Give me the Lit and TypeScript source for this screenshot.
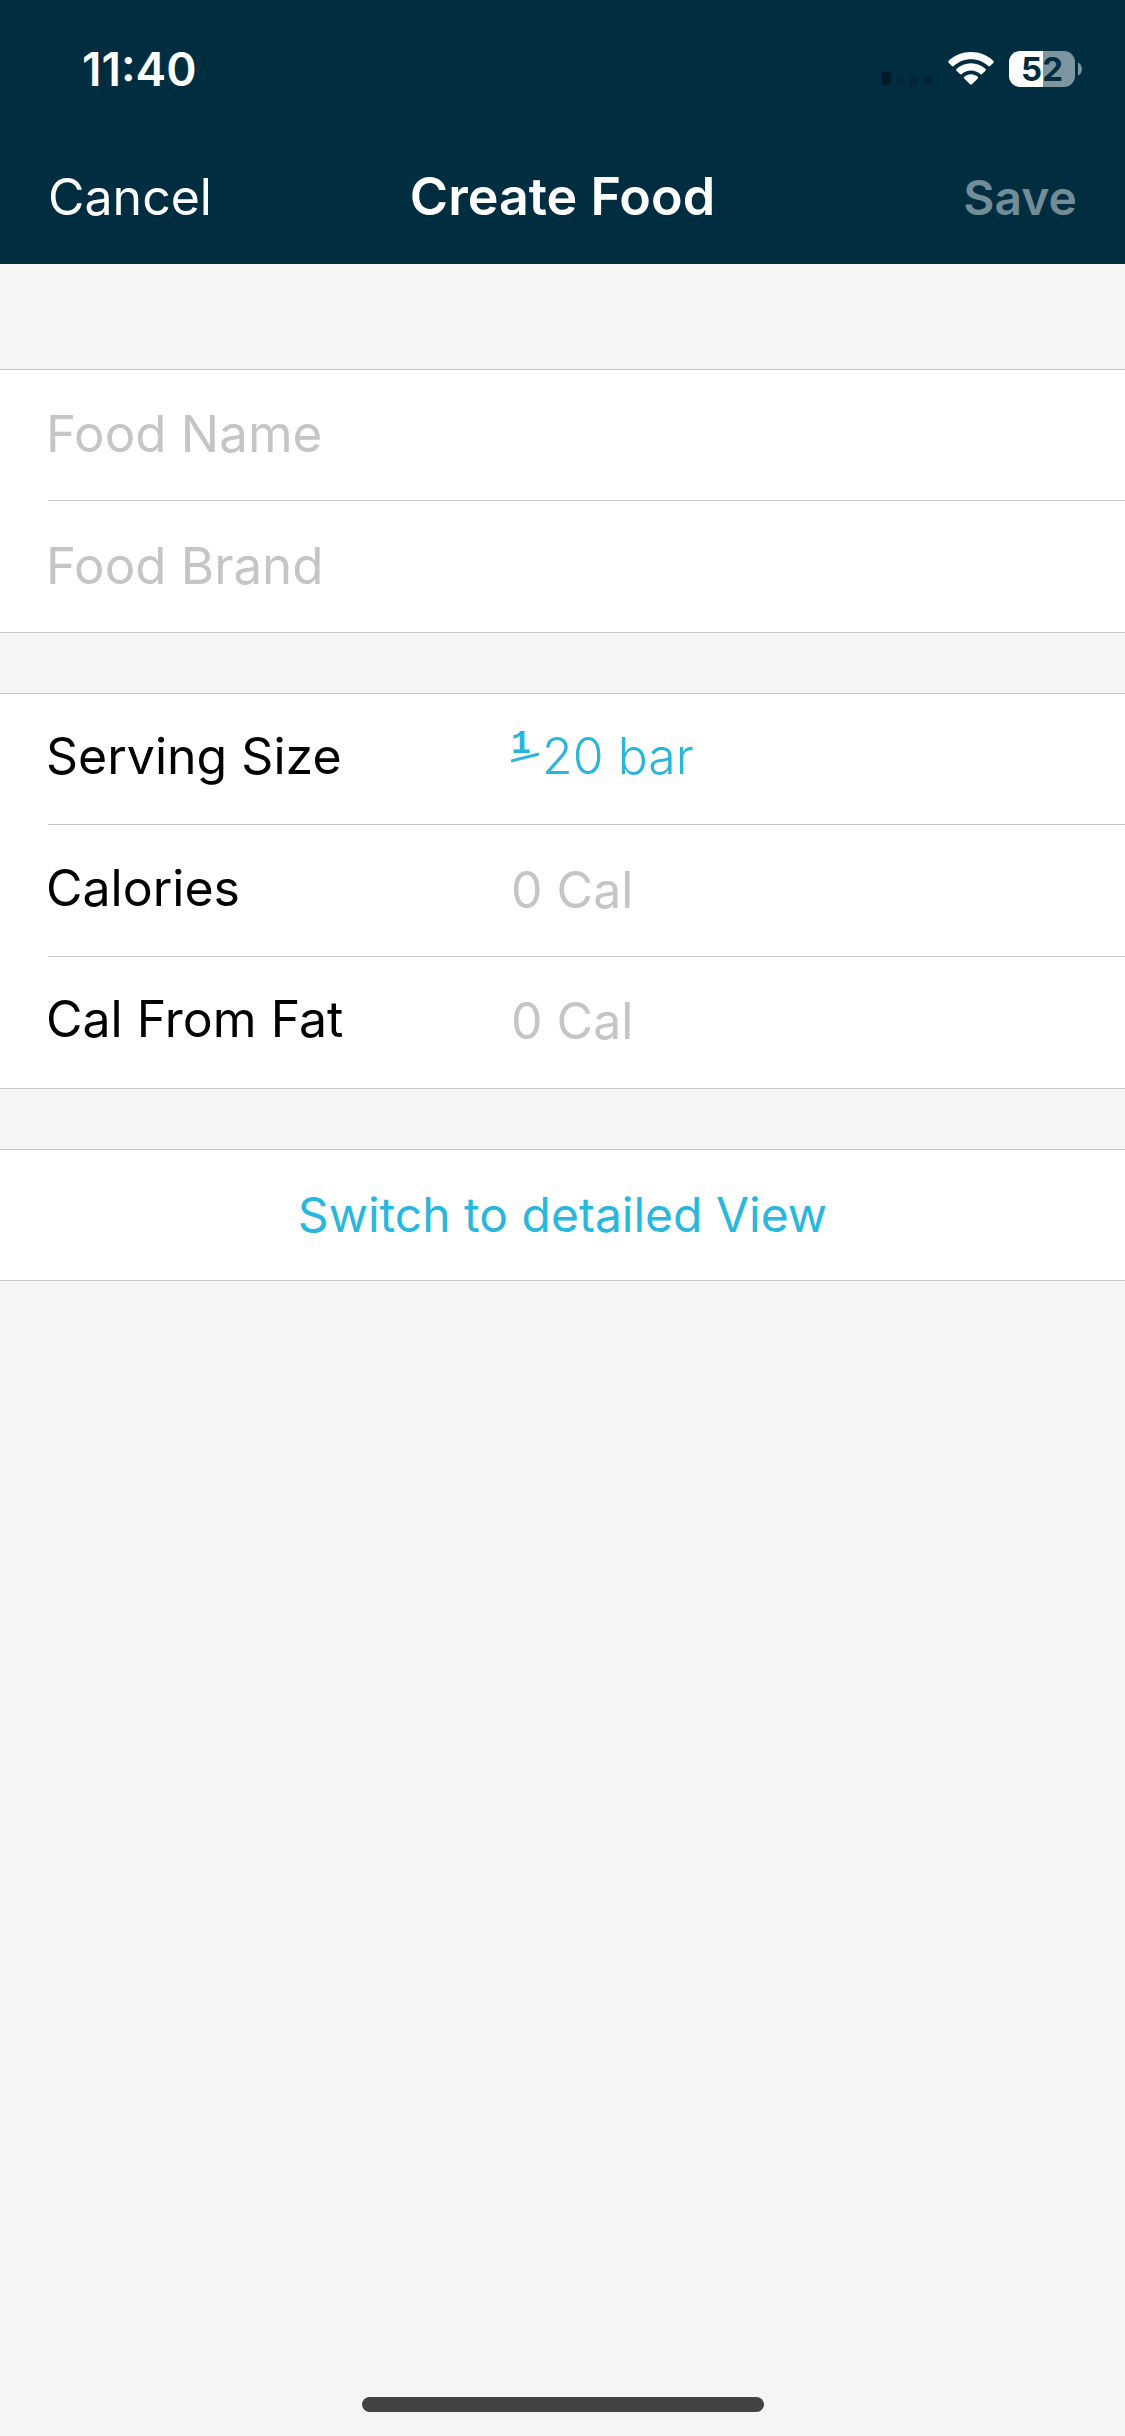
import { LitElement, html, svg, css } from "lit";
import { customElement, property } from "lit/decorators.js";

const shared = css`
  *,
  *::before,
  *::after {
    box-sizing: border-box;
  }
  button,
  input {
    margin: 0;
    padding: 0;
    border: 0;
    background: none;
    font: inherit;
    color: inherit;
    letter-spacing: inherit;
  }
  button {
    cursor: pointer;
  }
  input {
    outline: none;
  }
`;

@customElement("status-bar")
class StatusBar extends LitElement {
  static styles = [
    shared,
    css`
      :host {
        display: flex;
        align-items: center;
        justify-content: space-between;
        height: 132px;
        padding: 6px 43px 0 82px;
        color: #fff;
      }
      .time {
        font-size: 46px;
        font-weight: 600;
      }
      .icons {
        display: flex;
        align-items: center;
        gap: 15px;
      }
      .icon {
        display: block;
      }
      .battery {
        display: flex;
        align-items: center;
        gap: 3px;
      }
      .level {
        display: flex;
        align-items: center;
        justify-content: center;
        width: 66px;
        height: 36px;
        border-radius: 11px;
        background: linear-gradient(to right, #fff 52%, #7c959f 52%);
        color: #002d3f;
        font-size: 33px;
        font-weight: 700;
        line-height: 36px;
      }
    `,
  ];

  render() {
    return html`
      <span class="time">11:40</span>
      <div class="icons">
        <svg class="icon" width="51" height="36" viewBox="0 0 51 36" aria-hidden="true">
          <rect x="0" y="21" width="9" height="13" rx="2" fill="#001c2a" />
          <rect x="14" y="25" width="8" height="9" rx="2" fill="#002536" />
          <rect x="28" y="25" width="8" height="9" rx="2" fill="#002536" />
          <rect x="42" y="25" width="9" height="9" rx="2" fill="#002439" />
        </svg>
        <svg class="icon" width="46" height="36" viewBox="0 0 46 36" role="img" aria-label="Wi-Fi">
          <g fill="#fff">
            <path d="M23 1C14.500 1 6.600 4.300 0.700 9.700C0.100 10.300 0.100 11.100 0.600 11.700L3.900 15C4.400 15.500 5.200 15.500 5.800 15C10.300 10.800 16.300 8.300 23 8.300S35.700 10.800 40.200 15C40.800 15.500 41.600 15.500 42.100 15L45.400 11.700C45.900 11.100 45.900 10.300 45.300 9.700C39.400 4.300 31.500 1 23 1Z" />
            <path d="M23 12.200C17.500 12.200 12.400 14.300 8.600 17.700C8 18.300 8 19.100 8.500 19.700L11.900 23C12.400 23.500 13.200 23.500 13.800 23C16.200 20.800 19.500 19.500 23 19.500S29.800 20.800 32.200 23C32.800 23.500 33.600 23.500 34.100 23L37.500 19.700C38 19.100 38 18.300 37.400 17.700C33.600 14.300 28.500 12.200 23 12.200Z" />
            <path d="M23 23.200C20.500 23.200 18.200 24.100 16.400 25.600C15.800 26.100 15.800 26.900 16.300 27.500L22 33.200C22.600 33.800 23.400 33.800 24 33.200L29.700 27.500C30.200 26.900 30.200 26.100 29.600 25.600C27.800 24.100 25.500 23.200 23 23.200Z" />
          </g>
        </svg>
        <div class="battery">
          <span class="level">52</span>
          <svg class="icon" width="4" height="14" viewBox="0 0 4 14" aria-hidden="true">
            <path d="M0 0.500C2.400 1.700 4 4 4 7S2.400 12.300 0 13.500Z" fill="#7c959f" />
          </svg>
        </div>
      </div>
    `;
  }
}

@customElement("nav-bar")
class NavBar extends LitElement {
  @property() heading = "";

  static styles = [
    shared,
    css`
      :host {
        display: grid;
        grid-template-columns: 1fr auto 1fr;
        align-items: baseline;
        height: 132px;
        padding: 34px 48px 0;
        color: #fff;
        line-height: 62px;
      }
      .title {
        margin: 0;
        font-size: 52px;
        font-weight: 600;
      }
      .cancel {
        justify-self: start;
        font-size: 50px;
      }
      .save {
        justify-self: end;
        font-size: 48px;
        font-weight: 600;
        color: #728c98;
      }
    `,
  ];

  render() {
    return html`
      <button class="cancel" type="button">Cancel</button>
      <h1 class="title">${this.heading}</h1>
      <button class="save" type="button" disabled>Save</button>
    `;
  }
}

const slash = svg`<line x1="0" y1="9" x2="28" y2="2" stroke="currentColor" stroke-width="3" />`;

@customElement("app-root")
class AppRoot extends LitElement {
  static styles = [
    shared,
    css`
      :host {
        display: flex;
        flex-direction: column;
        min-height: 100vh;
        background: #f5f5f5;
        color: #000;
        font-family: Inter, "Liberation Sans", sans-serif;
        font-size: 50px;
      }
      .top {
        background: #002d3f;
      }
      .form {
        display: flex;
        flex-direction: column;
        gap: 60px;
        flex: 1;
        padding-top: 105px;
      }
      .group {
        background: #fff;
        border-bottom: 1px solid #c6c6c6;
        box-shadow: inset 0 1px #c6c6c6;
      }
      .row {
        display: grid;
        grid-template-columns: 465px 1fr;
        align-items: center;
        height: 132px;
        padding-left: 46px;
        padding-bottom: 3px;
        background: linear-gradient(#c6c6c6, #c6c6c6) 48px 100% / 100% 1px no-repeat;
      }
      .row.wide {
        grid-template-columns: 1fr;
        font-size: 51px;
      }
      .row:last-child {
        height: 131px;
        background: none;
      }
      .label {
        padding-bottom: 4px;
      }
      .field {
        width: 100%;
        min-width: 0;
      }
      .field::placeholder {
        color: #c5c5c5;
        opacity: 1;
      }
      .serving {
        display: flex;
        align-items: center;
        gap: 1px;
        padding-bottom: 3px;
        color: #2ab5da;
        font-weight: 300;
        text-align: left;
      }
      .fraction {
        display: flex;
        flex-direction: column;
        width: 30px;
        padding-bottom: 11px;
      }
      .numerator {
        font-family: "Liberation Mono", monospace;
        font-size: 33px;
        font-weight: 700;
        line-height: 14px;
      }
      .slash {
        display: block;
      }
      .switch {
        display: block;
        width: 100%;
        height: 131px;
        font-size: 48px;
        color: #28b7dd;
      }
      .home {
        align-self: center;
        width: 402px;
        height: 15px;
        margin-bottom: 24px;
        border-radius: 8px;
        background: #434343;
      }
    `,
  ];

  render() {
    return html`
      <header class="top">
        <status-bar></status-bar>
        <nav-bar heading="Create Food"></nav-bar>
      </header>
      <main class="form">
        <section class="group">
          <div class="row wide">
            <input class="field" type="text" placeholder="Food Name" aria-label="Food Name" />
          </div>
          <div class="row wide">
            <input class="field" type="text" placeholder="Food Brand" aria-label="Food Brand" />
          </div>
        </section>
        <section class="group">
          <div class="row">
            <label class="label" for="serving">Serving Size</label>
            <button class="serving" id="serving" type="button">
              <span class="fraction">
                <span class="numerator">1</span>
                <svg class="slash" width="30" height="12" viewBox="0 0 30 12" aria-hidden="true">${slash}</svg>
              </span>
              <span>20 bar</span>
            </button>
          </div>
          <div class="row">
            <label class="label" for="calories">Calories</label>
            <input class="field" id="calories" type="text" inputmode="numeric" placeholder="0 Cal" />
          </div>
          <div class="row">
            <label class="label" for="fat">Cal From Fat</label>
            <input class="field" id="fat" type="text" inputmode="numeric" placeholder="0 Cal" />
          </div>
        </section>
        <section class="group">
          <button class="switch" type="button">Switch to detailed View</button>
        </section>
      </main>
      <div class="home"></div>
    `;
  }
}
